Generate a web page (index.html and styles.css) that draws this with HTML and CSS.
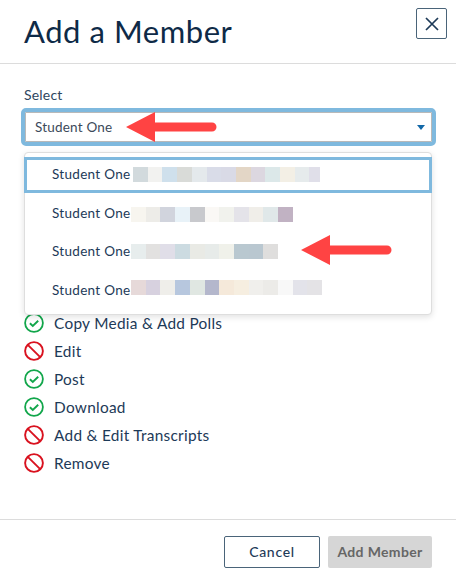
FILE: index.html
```html
<!DOCTYPE html>
<html lang="en">
<head>
<meta charset="utf-8">
<title>Add a Member</title>
<link rel="stylesheet" href="styles.css">
</head>
<body>
<div class="modal">
  <header class="head">
    <h1 class="title">Add a Member</h1>
    <button class="close" aria-label="Close">
      <svg viewBox="0 0 16 16" width="16" height="16"><path d="M2 2L14 14M14 2L2 14" class="close-x"/></svg>
    </button>
  </header>
  <main class="body">
    <label class="label">Select</label>
    <div class="select">
      <span>Student One</span>
      <svg class="caret" viewBox="0 0 8 5" width="8" height="5"><path d="M0 0H8L4 5Z"/></svg>
    </div>
    <ul class="perms">
      <li class="perm"><svg class="ico" viewBox="0 0 20 20"><use href="#ok"/></svg>Copy Media &amp; Add Polls</li>
      <li class="perm"><svg class="ico" viewBox="0 0 20 20"><use href="#no"/></svg>Edit</li>
      <li class="perm"><svg class="ico" viewBox="0 0 20 20"><use href="#ok"/></svg>Post</li>
      <li class="perm"><svg class="ico" viewBox="0 0 20 20"><use href="#ok"/></svg>Download</li>
      <li class="perm"><svg class="ico" viewBox="0 0 20 20"><use href="#no"/></svg>Add &amp; Edit Transcripts</li>
      <li class="perm"><svg class="ico" viewBox="0 0 20 20"><use href="#no"/></svg>Remove</li>
    </ul>
    <div class="menu">
      <div class="opt opt-active"><span>Student One</span><i class="blur blur-a"></i></div>
      <div class="opt opt-b"><span>Student One</span><i class="blur blur-b"></i></div>
      <div class="opt opt-c"><span>Student One</span><i class="blur blur-c"></i></div>
      <div class="opt opt-d"><span>Student One</span><i class="blur blur-d"></i></div>
    </div>
  </main>
  <footer class="foot">
    <button class="btn btn-cancel">Cancel</button>
    <button class="btn btn-add">Add Member</button>
  </footer>
  <svg class="arrow arrow-one" viewBox="0 0 91 30" width="91" height="30"><use href="#arrow"/></svg>
  <svg class="arrow arrow-two" viewBox="0 0 91 30" width="91" height="30"><use href="#arrow"/></svg>
</div>
<svg class="defs" width="0" height="0">
  <defs>
    <g id="ok"><circle cx="10" cy="10" r="8.9" fill="none" stroke="#12a64b" stroke-width="1.8"/><path d="M5.9 10.2L8.8 13L14.2 7.8" fill="none" stroke="#12a64b" stroke-width="1.9"/></g>
    <g id="no"><circle cx="10" cy="10" r="8.9" fill="none" stroke="#d9121f" stroke-width="1.9"/><path d="M3.8 3.8L16.2 16.2" fill="none" stroke="#d9121f" stroke-width="1.9"/></g>
    <path id="arrow" d="M0 15L29 0V10.5H86a4.5 4.5 0 0 1 0 9H29V30Z" fill="#ff4343"/>
  </defs>
</svg>
</body>
</html>
```
FILE: styles.css
```css
* { box-sizing: border-box; }
html, body { margin: 0; padding: 0; }
body {
  width: 456px;
  height: 583px;
  background: #fff;
  overflow: hidden;
  font-family: Lato, "Open Sans", sans-serif;
  color: #1d3a58;
}
.modal { position: relative; width: 456px; height: 583px; display: flex; flex-direction: column; }
.head {
  height: 64px;
  flex: none;
  border-bottom: 1px solid #dcdcdc;
  display: flex;
  justify-content: space-between;
  align-items: flex-start;
  padding: 8px 9px 0 24px;
}
.title { margin: 5px 0 0; font-size: 31px; line-height: 36px; font-weight: 400; color: #0e2a47; letter-spacing: 0.55px; }
.close {
  width: 31px; height: 31px; padding: 0;
  background: #fff;
  border: 1px solid #4a6479;
  border-radius: 2px;
  display: flex; align-items: center; justify-content: center;
}
.close-x { fill: none; stroke: #1d3a58; stroke-width: 1.7; }
.body { position: relative; flex: 1; padding: 23px 21px 0; }
.label { display: block; margin-left: 3px; font-size: 14px; line-height: 16px; color: #2e4660; letter-spacing: 0.2px; }
.select {
  margin-top: 5px;
  height: 38px;
  width: 415px;
  border: 4px solid #7fb9de;
  border-radius: 5px;
  display: flex; align-items: center; justify-content: space-between;
  padding: 0 7px 0 10px;
  font-size: 13.5px;
  letter-spacing: 0.2px;
  color: #3c4a5a;
  box-shadow: inset 0 0 0 1px #b9b9b9;
}
.caret { fill: #1268a8; }
.perms { list-style: none; margin: 0; padding: 0 0 0 3px; position: absolute; top: 245px; left: 21px; }
.perm { height: 28px; display: flex; align-items: center; gap: 10px; font-size: 15.4px; letter-spacing: 0.28px; color: #1d3a58; }
.ico { width: 20px; height: 20px; flex: none; }
.menu {
  position: absolute;
  left: 24px; top: 88px;
  width: 408px; height: 163px;
  background: #fff;
  border: 1px solid #dedede;
  border-radius: 4px;
  box-shadow: 0 2px 6px rgba(0,0,0,.12);
  padding-top: 4px;
  font-size: 13.5px;
  letter-spacing: 0.3px;
  color: #1d3a58;
}
.opt { display: flex; align-items: center; padding-left: 27px; white-space: nowrap; }
.opt-active { height: 36px; border: 3px solid #7fb9de; padding: 0 0 2px 25px; margin: 0 -1px; }
.opt-b { height: 39px; padding-top: 1px; }
.opt-c { height: 38px; }
.opt-d { height: 38px; padding-top: 2px; }
.blur { display: block; height: 15px; flex: none; }
.blur-a {
  width: 187px; margin: 1px 0 0 3px;
  background: linear-gradient(90deg,
    #d2dadd 0 15px, #f2f2f0 15px 29px, #cfe0ec 29px 44px, #d9dbd8 44px 59px, #e4e9ec 59px 74px,
    #d9dce8 74px 88px, #d9dae6 88px 103px, #e3d6c6 103px 118px, #dcd7e0 118px 132px, #dce8e9 132px 147px,
    #f3efe5 147px 162px, #e6ebec 162px 176px, #e0dfe9 176px 187px);
}
.blur-b {
  width: 162px; margin: 3px 0 0 1px;
  background: linear-gradient(90deg,
    #f7f5ef 0 15px, #edecE8 15px 29px, #d1d4dd 29px 44px, #e8f2f8 44px 59px, #c8c9cd 59px 74px,
    #faf8f5 74px 88px, #f1f2ed 88px 103px, #e4e3e9 103px 118px, #f0eee9 118px 132px, #e0e8e9 132px 147px,
    #c1b2c3 147px 162px);
}
.blur-c {
  width: 147px; margin: 1px 0 0 1px;
  background: linear-gradient(90deg,
    #e7eded 0 15px, #e2e1e0 15px 29px, #e0deE8 29px 44px, #ccdbe1 44px 59px, #e9eae5 59px 74px,
    #e7ebe9 74px 88px, #f0f1ea 88px 103px, #b9c8d0 103px 118px, #b9c7d0 118px 132px, #dfdedd 132px 147px);
}
.blur-d {
  width: 191px; margin: 0 0 5px 1px;
  background: linear-gradient(90deg,
    #e6d9d9 0 15px, #d7d1df 15px 29px, #efeeea 29px 44px, #b7c7de 44px 59px, #e0e7e2 59px 74px,
    #b4b7cc 74px 88px, #f5e9da 88px 103px, #f6eee0 103px 118px, #f0efec 118px 132px, #ecebe8 132px 147px,
    #f8f8f8 147px 162px, #e3e3ea 162px 176px, #e4e3e6 176px 191px);
}
.foot {
  height: 64px;
  flex: none;
  border-top: 1px solid #dcdcdc;
  display: flex;
  justify-content: flex-end;
  align-items: flex-start;
  gap: 8px;
  padding: 16px 24px 0 0;
}
.btn { height: 32px; border-radius: 2px; font-family: inherit; font-size: 14px; font-weight: 500; letter-spacing: 0.7px; padding: 0 0 2px; }
.btn-cancel { width: 96px; background: #fff; border: 1px solid #4a6479; color: #1d3a58; }
.btn-add { width: 104px; background: #d6d6d6; border: 0; color: #666; font-weight: 700; letter-spacing: 0.35px; }
.arrow { position: absolute; }
.arrow-one { left: 126px; top: 112px; }
.arrow-two { left: 301px; top: 235px; }
.defs { position: absolute; }
```
